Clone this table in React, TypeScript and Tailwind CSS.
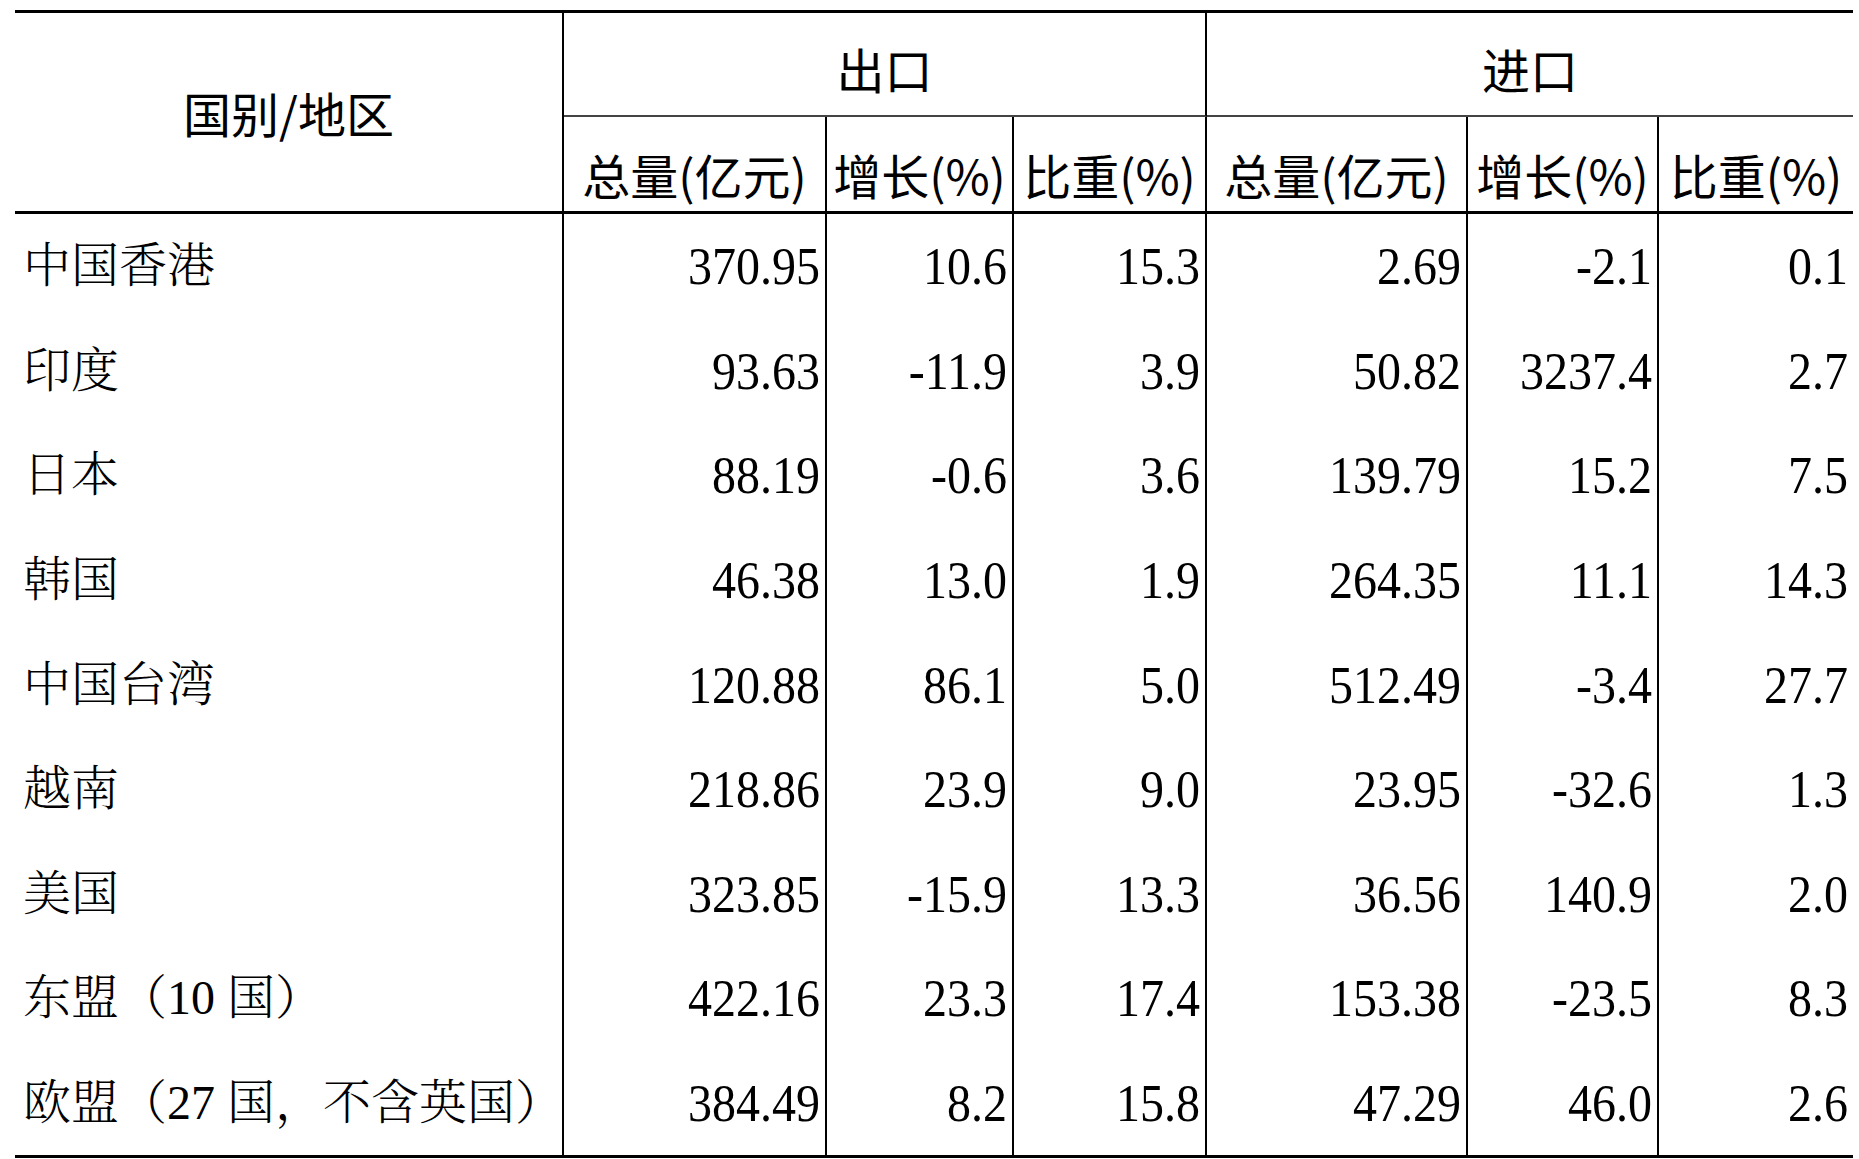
const cols = 'grid grid-cols-[549px_263px_187px_193px_261px_191px_194px]';

const rows: string[][] = [
	['中国香港', '370.95', '10.6', '15.3', '2.69', '-2.1', '0.1'],
	['印度', '93.63', '-11.9', '3.9', '50.82', '3237.4', '2.7'],
	['日本', '88.19', '-0.6', '3.6', '139.79', '15.2', '7.5'],
	['韩国', '46.38', '13.0', '1.9', '264.35', '11.1', '14.3'],
	['中国台湾', '120.88', '86.1', '5.0', '512.49', '-3.4', '27.7'],
	['越南', '218.86', '23.9', '9.0', '23.95', '-32.6', '1.3'],
	['美国', '323.85', '-15.9', '13.3', '36.56', '140.9', '2.0'],
	['东盟（10 国）', '422.16', '23.3', '17.4', '153.38', '-23.5', '8.3'],
	['欧盟（27 国，不含英国）', '384.49', '8.2', '15.8', '47.29', '46.0', '2.6'],
];

const subHeads = ['总量(亿元)', '增长(%)', '比重(%)', '总量(亿元)', '增长(%)', '比重(%)'];

export default function App() {
	return (
		<div className="h-[1159px] w-[1859px] overflow-hidden bg-white pl-[15px] pt-[10px] text-black">
			<div className="w-[1838px] border-t-[3px] border-black">
				{/* header */}
				<div
					className={`${cols} grid-rows-[104px_94px] border-b-[3px] border-black font-['Noto_Sans_CJK_SC',sans-serif] text-[48px] leading-none`}
				>
					<div className="row-span-2 flex items-center justify-center border-r-2 border-black">国别/地区</div>
					<div className="col-span-3 flex items-center justify-center border-r-2 border-b-2 border-r-black border-b-[#444] pt-[7px]">
						出口
					</div>
					<div className="col-span-3 flex items-center justify-center border-b-2 border-[#444] pt-[7px]">进口</div>
					{subHeads.map((h, i) => (
						<div
							key={i}
							className={`flex items-center justify-center whitespace-nowrap pt-[20px] ${i < 5 ? 'border-r-2 border-black' : ''}`}
						>
							{h}
						</div>
					))}
				</div>

				{/* body */}
				<div className={`${cols} auto-rows-[104.6px] border-b-[3px] border-black text-[48px] leading-none`}>
					{rows.map((r) =>
						r.map((c, j) =>
							j === 0 ? (
								<div
									key={r[0] + j}
									className="flex items-center whitespace-nowrap border-r-2 border-black pl-[8px] font-['Liberation_Serif','Noto_Serif_CJK_SC','Noto_Sans_CJK_SC_Light','Noto_Sans_CJK_SC_DemiLight','Noto_Sans_CJK_SC',serif] font-light"
								>
									{c}
								</div>
							) : (
								<div
									key={r[0] + j}
									className={`flex items-center justify-end pr-[5px] font-['Liberation_Serif','Times_New_Roman',serif] ${j < 6 ? 'border-r-2 border-black' : ''}`}
								>
									<span className="inline-block scale-y-110">{c}</span>
								</div>
							),
						),
					)}
				</div>
			</div>
		</div>
	);
}
